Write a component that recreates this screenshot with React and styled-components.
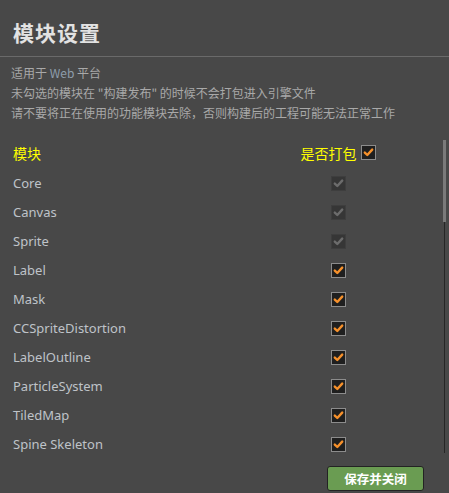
import React, { useState } from 'react'
import styled, { createGlobalStyle } from 'styled-components'

const GlobalStyle = createGlobalStyle`
  html, body {
    margin: 0;
    padding: 0;
    background: #484848;
  }
  body {
    font-family: "Noto Sans", "Noto Sans CJK SC", sans-serif;
  }
`

const Panel = styled.div`
  width: 449px;
  height: 493px;
  background: #484848;
  display: flex;
  flex-direction: column;
  overflow: hidden;
`

const Header = styled.div`
  height: 57px;
  box-sizing: border-box;
  padding: 8px 13px 0;
  display: flex;
  align-items: center;
  border-bottom: 1px solid #6a6a6a;
`

const Title = styled.h1`
  margin: 0;
  font-family: "Noto Sans CJK SC", sans-serif;
  font-size: 21px;
  font-weight: 700;
  color: #e2e2e2;
  letter-spacing: 1px;
`

const Notes = styled.div`
  padding: 6px 11px 0;
  font-family: "Noto Sans CJK SC", sans-serif;
  font-size: 12px;
  line-height: 20px;
  color: #a9a9a9;
`

const Web = styled.span`
  color: #8e9dab;
`

const Body = styled.div`
  display: flex;
  margin-top: 15px;
`

const List = styled.div`
  flex: 1;
  padding: 0 65px 0 13px;
`

const Row = styled.div`
  height: 29px;
  display: flex;
  align-items: center;
  justify-content: space-between;
`

const Name = styled.span`
  font-family: ${p => (p.$head ? '"Noto Sans CJK SC", sans-serif' : '"Noto Sans", sans-serif')};
  font-size: ${p => (p.$head ? '14px' : '13px')};
  color: ${p => (p.$head ? '#ffff00' : '#bfc3c8')};
  padding-top: ${p => (p.$head ? '0' : '3px')};
`

const Cell = styled.div`
  width: 80px;
  display: flex;
  align-items: center;
  justify-content: center;
  gap: 4px;
  font-family: "Noto Sans CJK SC", sans-serif;
  font-size: 14px;
  color: #ffff00;
  padding-top: ${p => (p.$head ? '0' : '3px')};
`

const Box = styled.span`
  width: 15px;
  height: 15px;
  box-sizing: border-box;
  display: inline-flex;
  align-items: center;
  justify-content: center;
  border: 1px solid ${p => (p.$disabled ? '#3e3e3e' : '#8c8c8c')};
  background: ${p => (p.$disabled ? '#363636' : '#1f1f1f')};
  cursor: ${p => (p.$disabled ? 'default' : 'pointer')};
`

const Scroll = styled.div`
  width: 3px;
  margin: 2px 3px 0 0;
  height: 313px;
  display: flex;
  flex-direction: column;
  align-items: center;
`

const Thumb = styled.div`
  width: 3px;
  height: 82px;
  background: #7a7a7a;
`

const Track = styled.div`
  width: 1px;
  flex: 1;
  background: #262626;
`

const Footer = styled.div`
  display: flex;
  justify-content: flex-end;
  padding: 9px 25px 0 0;
`

const SaveButton = styled.button`
  width: 97px;
  height: 25px;
  border: 1px solid #232323;
  border-radius: 3px;
  background: #6a9c52;
  color: #ffffff;
  font-family: "Noto Sans CJK SC", sans-serif;
  font-size: 12.5px;
  font-weight: 700;
  cursor: pointer;
  padding: 0;
  &:hover {
    background: #76aa5c;
  }
`

const Check = ({ disabled, checked, onClick }) => (
  <Box $disabled={disabled} onClick={disabled ? undefined : onClick}>
    {checked && (
      <svg width="11" height="11" viewBox="0 0 11 11">
        <path
          d="M1.8 5.6 L4.3 8 L9.2 2.6"
          fill="none"
          stroke={disabled ? '#6c6c6c' : '#f5902b'}
          strokeWidth="2.4"
          strokeLinecap="round"
          strokeLinejoin="round"
        />
      </svg>
    )}
  </Box>
)

const modules = [
  { name: 'Core', locked: true },
  { name: 'Canvas', locked: true },
  { name: 'Sprite', locked: true },
  { name: 'Label' },
  { name: 'Mask' },
  { name: 'CCSpriteDistortion' },
  { name: 'LabelOutline' },
  { name: 'ParticleSystem' },
  { name: 'TiledMap' },
  { name: 'Spine Skeleton' },
]

const App = () => {
  const [picked, setPicked] = useState(modules.map(() => true))
  const all = picked.every(Boolean)

  const toggle = i => {
    setPicked(picked.map((v, j) => (j === i ? !v : v)))
  }

  const toggleAll = () => {
    setPicked(modules.map(m => (m.locked ? true : !all)))
  }

  return <Panel>
    <GlobalStyle />
    <Header>
      <Title>模块设置</Title>
    </Header>
    <Notes>
      <div>适用于 <Web>Web</Web> 平台</div>
      <div>未勾选的模块在 "构建发布" 的时候不会打包进入引擎文件</div>
      <div>请不要将正在使用的功能模块去除，否则构建后的工程可能无法正常工作</div>
    </Notes>
    <Body>
      <List>
        <Row>
          <Name $head>模块</Name>
          <Cell $head>
            是否打包
            <Check checked={all} onClick={toggleAll} />
          </Cell>
        </Row>
        {modules.map((m, i) => (
          <Row key={m.name}>
            <Name>{m.name}</Name>
            <Cell>
              <Check disabled={m.locked} checked={picked[i]} onClick={() => toggle(i)} />
            </Cell>
          </Row>
        ))}
      </List>
      <Scroll>
        <Thumb />
        <Track />
      </Scroll>
    </Body>
    <Footer>
      <SaveButton>保存并关闭</SaveButton>
    </Footer>
  </Panel>
}

export default App
